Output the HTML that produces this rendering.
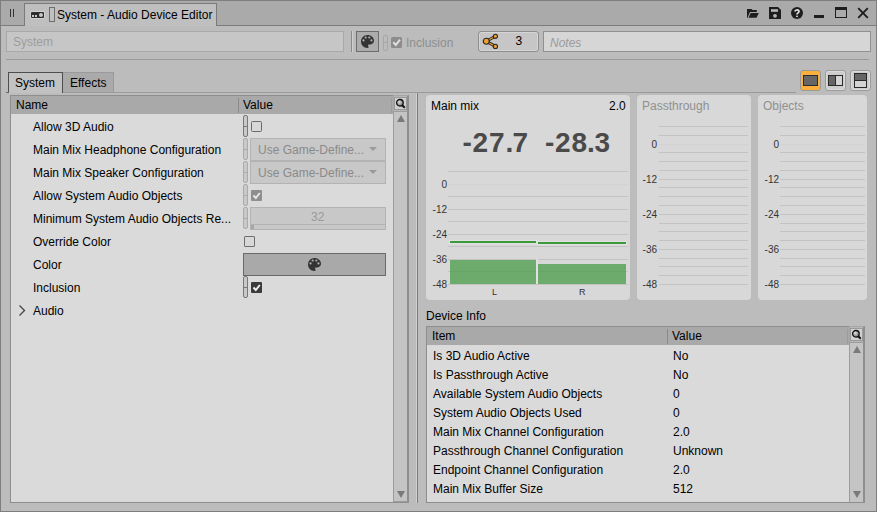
<!DOCTYPE html>
<html><head><meta charset="utf-8">
<style>
*{box-sizing:border-box;margin:0;padding:0}
html,body{width:877px;height:512px;overflow:hidden}
body{position:relative;background:#bcbcbc;font-family:"Liberation Sans",sans-serif;font-size:12px;color:#000000}
.a{position:absolute}
.t{position:absolute;white-space:nowrap;line-height:14px}
svg.a{overflow:visible}
</style></head><body>
<div class="a" style="left:0px;top:0px;width:877px;height:512px;border:1px solid #7e7e7e"></div>
<div class="a" style="left:1px;top:1px;width:875px;height:25px;background:#aaaaaa;border-bottom:1px solid #7c7c7c"></div>
<div class="a" style="left:10px;top:9px;width:1px;height:8px;background:#333"></div>
<div class="a" style="left:13px;top:9px;width:1px;height:8px;background:#333"></div>
<div class="a" style="left:24px;top:3px;width:193px;height:23px;background:#bfbfbf;border:1px solid #7a7a7a;border-bottom:none"></div>
<div class="t" style="left:57px;top:8px;">System - Audio Device Editor</div>
<div class="a" style="left:30px;top:11px;width:15px;height:8px;background:#d2d2d2;border-radius:2px"></div>
<div class="a" style="left:31px;top:12px;width:13px;height:6px;background:#2d2d2d;border-radius:1px"></div>
<div class="a" style="left:32px;top:15px;width:2px;height:2px;background:#c8c8c8"></div>
<div class="a" style="left:35px;top:15px;width:2px;height:2px;background:#c8c8c8"></div>
<div class="a" style="left:39px;top:13px;width:4px;height:4px;background:#c8c8c8;border-radius:50%"></div>
<div class="a" style="left:49px;top:7px;width:6px;height:15px;background:#c0c0c0;border:1px solid #6e6e6e"></div>
<svg class="a" style="left:744px;top:5px" width="20" height="16" viewBox="0 0 20 16"><path d="M3 3.9 H7.5 L8.5 5 H12.8 V6.9 H6 L3.9 11.8 V12.65 H3 Z" fill="#1e1e1e"/><path d="M6.7 8 H14.8 L12.5 12.65 H4.5 Z" fill="#1e1e1e"/></svg>
<svg class="a" style="left:769px;top:7px" width="12" height="12" viewBox="0 0 12 12"><path d="M0 0 H9 L12 3 V12 H0 Z" fill="#1e1e1e"/><rect x="2" y="2.2" width="7" height="2.6" fill="#b8b8b8"/><circle cx="6" cy="8.8" r="1.9" fill="#b8b8b8"/></svg>
<svg class="a" style="left:791px;top:7px" width="12" height="12" viewBox="0 0 12 12"><circle cx="6" cy="6" r="6" fill="#1e1e1e"/><path d="M4 4.6 C4 2.4 8 2.4 8 4.4 C8 5.9 6 5.9 6 7.5" fill="none" stroke="#e8e8e8" stroke-width="1.6"/><rect x="5.2" y="8.6" width="1.6" height="1.5" fill="#e8e8e8"/></svg>
<div class="a" style="left:814px;top:15px;width:10px;height:3px;background:#1e1e1e"></div>
<div class="a" style="left:835px;top:7px;width:12px;height:11px;border:1px solid #1e1e1e;border-top-width:3px"></div>
<svg class="a" style="left:857px;top:7px" width="12" height="12" viewBox="0 0 12 12"><path d="M1.2 1.2 L10.8 10.8 M10.8 1.2 L1.2 10.8" stroke="#1e1e1e" stroke-width="1.9"/></svg>
<div class="a" style="left:6px;top:31px;width:338px;height:21px;background:#c6c6c6;border:1px solid #a9a9a9"></div>
<div class="t" style="left:13px;top:35px;color:#9c9c9c">System</div>
<div class="a" style="left:351px;top:31px;width:1px;height:21px;background:#8a8a8a"></div>
<div class="a" style="left:352px;top:31px;width:1px;height:21px;background:#d0d0d0"></div>
<div class="a" style="left:356px;top:31px;width:23px;height:21px;background:#acacac;border:1px solid #6e6e6e"></div>
<svg class="a" style="left:361px;top:35px" width="13" height="13" viewBox="3 3 18 18"><path d="M12 3c-4.97 0-9 4.03-9 9s4.03 9 9 9c.83 0 1.5-.67 1.5-1.5 0-.39-.15-.74-.39-1.01-.23-.26-.38-.61-.38-.99 0-.83.67-1.5 1.5-1.5H16c2.76 0 5-2.24 5-5 0-4.42-4.03-8-9-8zm-5.5 9c-.83 0-1.5-.67-1.5-1.5S5.67 9 6.5 9 8 9.67 8 10.5 7.33 12 6.5 12zm3-4C8.67 8 8 7.33 8 6.5S8.67 5 9.5 5s1.5.67 1.5 1.5S10.33 8 9.5 8zm5 0c-.83 0-1.5-.67-1.5-1.5S13.67 5 14.5 5s1.5.67 1.5 1.5S15.33 8 14.5 8zm3 4c-.83 0-1.5-.67-1.5-1.5S16.67 9 17.5 9s1.5.67 1.5 1.5-.67 1.5-1.5 1.5z" fill="#333" fill-rule="evenodd"/></svg>
<div class="a" style="left:383px;top:35px;width:5px;height:16px;border:1px solid #a6a6a6;border-radius:2px"></div>
<div class="a" style="left:383px;top:42px;width:5px;height:1px;background:#a6a6a6"></div>
<div class="a" style="left:391px;top:37px;width:11px;height:11px;background:#8c8c8c;border-radius:1.5px"></div>
<svg class="a" style="left:391px;top:37px" width="11" height="11"><path d="M2.3 5.3 L4.8 8 L9 2.6" fill="none" stroke="#e0e0e0" stroke-width="2"/></svg>
<div class="t" style="left:406px;top:36px;color:#8e8e8e">Inclusion</div>
<div class="a" style="left:478px;top:31px;width:61px;height:21px;background:#c6c6c6;border:1px solid #8e8e8e;border-radius:3px;box-shadow:inset 0 0 0 1px #d6d6d6"></div>
<svg class="a" style="left:480px;top:32px" width="20" height="19" viewBox="0 0 20 19"><path d="M6.3 9.25 L15.4 4.3 M6.3 9.25 L15.4 14.4" stroke="#2a2a2a" stroke-width="3"/><path d="M6.3 9.25 L15.4 4.3 M6.3 9.25 L15.4 14.4" stroke="#f0a030" stroke-width="1.2"/><circle cx="6.3" cy="9.25" r="3" fill="#f0a030" stroke="#2a2a2a" stroke-width="1.2"/><circle cx="15.4" cy="4.3" r="2.1" fill="#f0a030" stroke="#2a2a2a" stroke-width="1.1"/><circle cx="15.4" cy="14.4" r="2.1" fill="#f0a030" stroke="#2a2a2a" stroke-width="1.1"/></svg>
<div class="t" style="left:515.5px;top:34px;">3</div>
<div class="a" style="left:543px;top:31px;width:328px;height:21px;background:#d6d6d6;border:1px solid #909090"></div>
<div class="t" style="left:550px;top:36px;color:#9a9a9a;font-style:italic">Notes</div>
<div class="a" style="left:6px;top:59px;width:863px;height:1px;background:#9a9a9a"></div>
<div class="a" style="left:8px;top:72px;width:55px;height:21px;background:#c2c2c2;border:1px solid #4e4e4e;border-bottom:none"></div>
<div class="t" style="left:15px;top:76px;">System</div>
<div class="a" style="left:63px;top:72px;width:51px;height:20px;background:#aaaaaa;border:1px solid #9a9a9a;border-bottom:none;border-left:none"></div>
<div class="t" style="left:70px;top:76px;">Effects</div>
<div class="a" style="left:63px;top:92px;width:733px;height:1px;background:#9a9a9a"></div>
<div class="a" style="left:6px;top:92px;width:3px;height:1px;background:#6a6a6a"></div>
<div class="a" style="left:10px;top:95px;width:399px;height:408px;background:#dadada;border:1px solid #8e8e8e"></div>
<div class="a" style="left:11px;top:96px;width:382px;height:18px;background:#a9a9a9"></div>
<div class="t" style="left:16px;top:98px;">Name</div>
<div class="a" style="left:238px;top:98px;width:1px;height:15px;background:#8a8a8a"></div>
<div class="t" style="left:243px;top:98px;">Value</div>
<div class="a" style="left:393px;top:95px;width:16px;height:17px;background:#b8b8b8;border:1px solid #a6a6a6;border-right:2px solid #8e8e8e"></div>
<div class="a" style="left:394px;top:97px;width:13px;height:13px;background:#d0d0d0;border:1px solid #9a9a9a"></div>
<svg class="a" style="left:395px;top:98px" width="12" height="12"><defs><radialGradient id="mg1" cx="0.4" cy="0.35" r="0.7"><stop offset="0" stop-color="#e0e0e0"/><stop offset="1" stop-color="#707070"/></radialGradient></defs><circle cx="4.9" cy="4.8" r="3.3" fill="url(#mg1)" stroke="#111" stroke-width="1.3"/><path d="M7.2 7.2 L9.8 9.8" stroke="#111" stroke-width="2"/></svg>
<div class="a" style="left:391px;top:98px;width:1px;height:15px;background:#9c9c9c"></div>
<div class="a" style="left:393px;top:111px;width:16px;height:391px;background:#c4c4c4;border:1px solid #9c9c9c;border-right:2px solid #8e8e8e"></div>
<div class="a" style="left:397px;top:115px;width:0;height:0;border-left:4px solid transparent;border-right:4px solid transparent;border-bottom:7px solid #7a7a7a"></div>
<div class="a" style="left:397px;top:491px;width:0;height:0;border-left:4px solid transparent;border-right:4px solid transparent;border-top:7px solid #7a7a7a"></div>
<div class="t" style="left:33px;top:120px;">Allow 3D Audio</div>
<div class="t" style="left:33px;top:143px;">Main Mix Headphone Configuration</div>
<div class="t" style="left:33px;top:166px;">Main Mix Speaker Configuration</div>
<div class="t" style="left:33px;top:189px;">Allow System Audio Objects</div>
<div class="t" style="left:33px;top:212px;">Minimum System Audio Objects Re...</div>
<div class="t" style="left:33px;top:235px;">Override Color</div>
<div class="t" style="left:33px;top:258px;">Color</div>
<div class="t" style="left:33px;top:281px;">Inclusion</div>
<div class="t" style="left:33px;top:304px;">Audio</div>
<div class="a" style="left:243px;top:115px;width:5px;height:22px;background:#c9c9c9;border:1px solid #787878;border-radius:2px"></div>
<div class="a" style="left:243px;top:126px;width:5px;height:1px;background:#787878"></div>
<div class="a" style="left:251px;top:121px;width:11px;height:11px;background:#d8d8d8;border:1px solid #6a6a6a;border-radius:1.5px"></div>
<div class="a" style="left:243px;top:138px;width:5px;height:22px;background:#c9c9c9;border:1px solid #ababab;border-radius:2px"></div>
<div class="a" style="left:243px;top:149px;width:5px;height:1px;background:#ababab"></div>
<div class="a" style="left:250px;top:138px;width:136px;height:23px;background:#c8c8c8;border:1px solid #b3b3b3"></div>
<div class="t" style="left:258px;top:143px;color:#8a8a8a">Use Game-Define...</div>
<div class="a" style="left:369px;top:147px;width:0;height:0;border-left:4px solid transparent;border-right:4px solid transparent;border-top:4px solid #9a9a9a"></div>
<div class="a" style="left:243px;top:161px;width:5px;height:22px;background:#c9c9c9;border:1px solid #ababab;border-radius:2px"></div>
<div class="a" style="left:243px;top:172px;width:5px;height:1px;background:#ababab"></div>
<div class="a" style="left:250px;top:161px;width:136px;height:23px;background:#c8c8c8;border:1px solid #b3b3b3"></div>
<div class="t" style="left:258px;top:166px;color:#8a8a8a">Use Game-Define...</div>
<div class="a" style="left:369px;top:170px;width:0;height:0;border-left:4px solid transparent;border-right:4px solid transparent;border-top:4px solid #9a9a9a"></div>
<div class="a" style="left:243px;top:184px;width:5px;height:22px;background:#c9c9c9;border:1px solid #ababab;border-radius:2px"></div>
<div class="a" style="left:243px;top:195px;width:5px;height:1px;background:#ababab"></div>
<div class="a" style="left:251px;top:190px;width:11px;height:11px;background:#8e8e8e;border-radius:1px"></div>
<svg class="a" style="left:251px;top:190px" width="11" height="11"><path d="M2.5 5.5 L4.8 8 L8.8 3" fill="none" stroke="#e6e6e6" stroke-width="2"/></svg>
<div class="a" style="left:243px;top:207px;width:5px;height:22px;background:#c9c9c9;border:1px solid #ababab;border-radius:2px"></div>
<div class="a" style="left:243px;top:218px;width:5px;height:1px;background:#ababab"></div>
<div class="a" style="left:250px;top:207px;width:136px;height:23px;background:#c8c8c8;border:1px solid #b3b3b3"></div>
<div class="a" style="left:251px;top:224px;width:134px;height:1px;background:#b3b3b3"></div>
<div class="a" style="left:251px;top:225px;width:3px;height:4px;background:#a6a6a6"></div>
<div class="t" style="left:311px;top:210px;color:#9a9a9a">32</div>
<div class="a" style="left:244px;top:236px;width:11px;height:11px;background:#d8d8d8;border:1px solid #6e6e6e;border-radius:1px"></div>
<div class="a" style="left:243px;top:253px;width:143px;height:23px;background:#a9a9a9;border:1px solid #6a6a6a"></div>
<svg class="a" style="left:308px;top:258px" width="13" height="13" viewBox="3 3 18 18"><path d="M12 3c-4.97 0-9 4.03-9 9s4.03 9 9 9c.83 0 1.5-.67 1.5-1.5 0-.39-.15-.74-.39-1.01-.23-.26-.38-.61-.38-.99 0-.83.67-1.5 1.5-1.5H16c2.76 0 5-2.24 5-5 0-4.42-4.03-8-9-8zm-5.5 9c-.83 0-1.5-.67-1.5-1.5S5.67 9 6.5 9 8 9.67 8 10.5 7.33 12 6.5 12zm3-4C8.67 8 8 7.33 8 6.5S8.67 5 9.5 5s1.5.67 1.5 1.5S10.33 8 9.5 8zm5 0c-.83 0-1.5-.67-1.5-1.5S13.67 5 14.5 5s1.5.67 1.5 1.5S15.33 8 14.5 8zm3 4c-.83 0-1.5-.67-1.5-1.5S16.67 9 17.5 9s1.5.67 1.5 1.5-.67 1.5-1.5 1.5z" fill="#333" fill-rule="evenodd"/></svg>
<div class="a" style="left:243px;top:276px;width:5px;height:22px;background:#c9c9c9;border:1px solid #787878;border-radius:2px"></div>
<div class="a" style="left:243px;top:287px;width:5px;height:1px;background:#787878"></div>
<div class="a" style="left:251px;top:282px;width:11px;height:11px;background:#3a3a3a;border-radius:1px"></div>
<svg class="a" style="left:251px;top:282px" width="11" height="11"><path d="M2.5 5.5 L4.8 8 L8.8 3" fill="none" stroke="#f0f0f0" stroke-width="2"/></svg>
<svg class="a" style="left:17px;top:304px" width="10" height="14"><path d="M2.5 1.5 L7.5 6.5 L2.5 11.5" fill="none" stroke="#444" stroke-width="1.3"/></svg>
<div class="a" style="left:416px;top:93px;width:1px;height:410px;background:#d0d0d0"></div>
<div class="a" style="left:417px;top:93px;width:1px;height:410px;background:#7c7c7c"></div>
<div class="a" style="left:800px;top:70px;width:21px;height:21px;background:#fbb03b;border:1px solid #9a9a9a;border-radius:3px"></div>
<div class="a" style="left:803px;top:75px;width:15px;height:11px;background:#666;border:1.5px solid #2a2a3a"></div>
<div class="a" style="left:825px;top:70px;width:21px;height:21px;background:#cdcdcd;border:1px solid #9a9a9a;border-radius:3px;box-shadow:inset 0 0 0 1px #dcdcdc"></div>
<div class="a" style="left:828px;top:75px;width:15px;height:11px;background:linear-gradient(90deg,#666 0,#666 50%,#d4d4d4 50%);border:1.5px solid #2a2a2a"></div>
<div class="a" style="left:835px;top:75px;width:1px;height:11px;background:#2a2a2a"></div>
<div class="a" style="left:850px;top:70px;width:21px;height:21px;background:#cdcdcd;border:1px solid #9a9a9a;border-radius:3px;box-shadow:inset 0 0 0 1px #dcdcdc"></div>
<div class="a" style="left:854px;top:73px;width:13px;height:15px;background:linear-gradient(180deg,#666 0,#666 50%,#d4d4d4 50%);border:1.5px solid #2a2a2a"></div>
<div class="a" style="left:854px;top:80px;width:13px;height:1px;background:#2a2a2a"></div>
<div class="a" style="left:426px;top:95px;width:204px;height:205px;background:#d8d8d8;border-radius:4px"></div>
<div class="t" style="left:431px;top:99px;">Main mix</div>
<div class="t" style="left:609px;top:99px;">2.0</div>
<div class="a" style="left:637px;top:95px;width:114px;height:205px;background:#d8d8d8;border-radius:4px"></div>
<div class="t" style="left:642px;top:99px;color:#909090">Passthrough</div>
<div class="a" style="left:758px;top:95px;width:109px;height:205px;background:#d8d8d8;border-radius:4px"></div>
<div class="t" style="left:763px;top:99px;color:#909090">Objects</div>
<div class="t" style="left:462.5px;top:128px;font-size:28px;line-height:30px;font-weight:bold;color:#4a4a4a;letter-spacing:0.8px">-27<span style="margin-right:-1.5px">.</span>7</div>
<div class="t" style="left:545px;top:128px;font-size:28px;line-height:30px;font-weight:bold;color:#4a4a4a;letter-spacing:0.8px">-28<span style="margin-left:-1px;margin-right:-1px">.</span>3</div>
<div class="a" style="left:448px;top:171px;width:180px;height:1px;background:#c3c3c3"></div>
<div class="a" style="left:448px;top:184px;width:180px;height:1px;background:#d2d2d2"></div>
<div class="a" style="left:448px;top:196px;width:180px;height:1px;background:#c3c3c3"></div>
<div class="a" style="left:448px;top:209px;width:180px;height:1px;background:#c3c3c3"></div>
<div class="a" style="left:448px;top:221px;width:180px;height:1px;background:#c3c3c3"></div>
<div class="a" style="left:448px;top:234px;width:180px;height:1px;background:#c3c3c3"></div>
<div class="a" style="left:448px;top:246px;width:180px;height:1px;background:#c3c3c3"></div>
<div class="a" style="left:448px;top:259px;width:180px;height:1px;background:#c3c3c3"></div>
<div class="a" style="left:448px;top:271px;width:180px;height:1px;background:#c3c3c3"></div>
<div class="a" style="left:448px;top:284px;width:180px;height:1px;background:#c3c3c3"></div>
<div class="t" style="left:407px;top:178px;width:40px;text-align:right;font-size:10px;color:#333">0</div>
<div class="t" style="left:407px;top:203px;width:40px;text-align:right;font-size:10px;color:#333">-12</div>
<div class="t" style="left:407px;top:228px;width:40px;text-align:right;font-size:10px;color:#333">-24</div>
<div class="t" style="left:407px;top:253px;width:40px;text-align:right;font-size:10px;color:#333">-36</div>
<div class="t" style="left:407px;top:278px;width:40px;text-align:right;font-size:10px;color:#333">-48</div>
<div class="a" style="left:450px;top:260px;width:86px;height:24px;background:#6dab6d"></div>
<div class="a" style="left:538px;top:264px;width:88px;height:20px;background:#6dab6d"></div>
<div class="a" style="left:450px;top:271px;width:176px;height:1px;background:rgba(0,0,0,0.045)"></div>
<div class="a" style="left:536px;top:259px;width:2px;height:25px;background:#e0e0e0"></div>
<div class="a" style="left:450px;top:241px;width:86px;height:2px;background:#3a9a3a;box-shadow:0 0 0 1px #e2e2e2"></div>
<div class="a" style="left:538px;top:242px;width:88px;height:2px;background:#3a9a3a;box-shadow:0 0 0 1px #e2e2e2"></div>
<div class="t" style="left:492px;top:285px;font-size:9px;color:#333">L</div>
<div class="t" style="left:579px;top:285px;font-size:9px;color:#333">R</div>
<div class="a" style="left:659px;top:126px;width:89px;height:1px;background:#c3c3c3"></div>
<div class="a" style="left:659px;top:135px;width:89px;height:1px;background:#c3c3c3"></div>
<div class="a" style="left:659px;top:144px;width:89px;height:1px;background:#d2d2d2"></div>
<div class="a" style="left:659px;top:152px;width:89px;height:1px;background:#c3c3c3"></div>
<div class="a" style="left:659px;top:161px;width:89px;height:1px;background:#c3c3c3"></div>
<div class="a" style="left:659px;top:170px;width:89px;height:1px;background:#c3c3c3"></div>
<div class="a" style="left:659px;top:179px;width:89px;height:1px;background:#c3c3c3"></div>
<div class="a" style="left:659px;top:187px;width:89px;height:1px;background:#c3c3c3"></div>
<div class="a" style="left:659px;top:196px;width:89px;height:1px;background:#c3c3c3"></div>
<div class="a" style="left:659px;top:205px;width:89px;height:1px;background:#c3c3c3"></div>
<div class="a" style="left:659px;top:214px;width:89px;height:1px;background:#c3c3c3"></div>
<div class="a" style="left:659px;top:223px;width:89px;height:1px;background:#c3c3c3"></div>
<div class="a" style="left:659px;top:231px;width:89px;height:1px;background:#c3c3c3"></div>
<div class="a" style="left:659px;top:240px;width:89px;height:1px;background:#c3c3c3"></div>
<div class="a" style="left:659px;top:249px;width:89px;height:1px;background:#c3c3c3"></div>
<div class="a" style="left:659px;top:258px;width:89px;height:1px;background:#c3c3c3"></div>
<div class="a" style="left:659px;top:266px;width:89px;height:1px;background:#c3c3c3"></div>
<div class="a" style="left:659px;top:275px;width:89px;height:1px;background:#c3c3c3"></div>
<div class="a" style="left:659px;top:284px;width:89px;height:1px;background:#c3c3c3"></div>
<div class="t" style="left:617px;top:138px;width:40px;text-align:right;font-size:10px;color:#333">0</div>
<div class="t" style="left:617px;top:173px;width:40px;text-align:right;font-size:10px;color:#333">-12</div>
<div class="t" style="left:617px;top:208px;width:40px;text-align:right;font-size:10px;color:#333">-24</div>
<div class="t" style="left:617px;top:243px;width:40px;text-align:right;font-size:10px;color:#333">-36</div>
<div class="t" style="left:617px;top:278px;width:40px;text-align:right;font-size:10px;color:#333">-48</div>
<div class="a" style="left:780px;top:126px;width:85px;height:1px;background:#c3c3c3"></div>
<div class="a" style="left:780px;top:135px;width:85px;height:1px;background:#c3c3c3"></div>
<div class="a" style="left:780px;top:144px;width:85px;height:1px;background:#d2d2d2"></div>
<div class="a" style="left:780px;top:152px;width:85px;height:1px;background:#c3c3c3"></div>
<div class="a" style="left:780px;top:161px;width:85px;height:1px;background:#c3c3c3"></div>
<div class="a" style="left:780px;top:170px;width:85px;height:1px;background:#c3c3c3"></div>
<div class="a" style="left:780px;top:179px;width:85px;height:1px;background:#c3c3c3"></div>
<div class="a" style="left:780px;top:187px;width:85px;height:1px;background:#c3c3c3"></div>
<div class="a" style="left:780px;top:196px;width:85px;height:1px;background:#c3c3c3"></div>
<div class="a" style="left:780px;top:205px;width:85px;height:1px;background:#c3c3c3"></div>
<div class="a" style="left:780px;top:214px;width:85px;height:1px;background:#c3c3c3"></div>
<div class="a" style="left:780px;top:223px;width:85px;height:1px;background:#c3c3c3"></div>
<div class="a" style="left:780px;top:231px;width:85px;height:1px;background:#c3c3c3"></div>
<div class="a" style="left:780px;top:240px;width:85px;height:1px;background:#c3c3c3"></div>
<div class="a" style="left:780px;top:249px;width:85px;height:1px;background:#c3c3c3"></div>
<div class="a" style="left:780px;top:258px;width:85px;height:1px;background:#c3c3c3"></div>
<div class="a" style="left:780px;top:266px;width:85px;height:1px;background:#c3c3c3"></div>
<div class="a" style="left:780px;top:275px;width:85px;height:1px;background:#c3c3c3"></div>
<div class="a" style="left:780px;top:284px;width:85px;height:1px;background:#c3c3c3"></div>
<div class="t" style="left:739px;top:138px;width:40px;text-align:right;font-size:10px;color:#333">0</div>
<div class="t" style="left:739px;top:173px;width:40px;text-align:right;font-size:10px;color:#333">-12</div>
<div class="t" style="left:739px;top:208px;width:40px;text-align:right;font-size:10px;color:#333">-24</div>
<div class="t" style="left:739px;top:243px;width:40px;text-align:right;font-size:10px;color:#333">-36</div>
<div class="t" style="left:739px;top:278px;width:40px;text-align:right;font-size:10px;color:#333">-48</div>
<div class="t" style="left:426px;top:309px;">Device Info</div>
<div class="a" style="left:426px;top:326px;width:439px;height:177px;background:#dadada;border:1px solid #8e8e8e"></div>
<div class="a" style="left:427px;top:327px;width:423px;height:18px;background:#a9a9a9"></div>
<div class="t" style="left:432px;top:329px;">Item</div>
<div class="a" style="left:667px;top:329px;width:1px;height:15px;background:#8a8a8a"></div>
<div class="t" style="left:672px;top:329px;">Value</div>
<div class="t" style="left:433px;top:349px;">Is 3D Audio Active</div>
<div class="t" style="left:673px;top:349px;">No</div>
<div class="t" style="left:433px;top:368px;">Is Passthrough Active</div>
<div class="t" style="left:673px;top:368px;">No</div>
<div class="t" style="left:433px;top:387px;">Available System Audio Objects</div>
<div class="t" style="left:673px;top:387px;">0</div>
<div class="t" style="left:433px;top:406px;">System Audio Objects Used</div>
<div class="t" style="left:673px;top:406px;">0</div>
<div class="t" style="left:433px;top:425px;">Main Mix Channel Configuration</div>
<div class="t" style="left:673px;top:425px;">2.0</div>
<div class="t" style="left:433px;top:444px;">Passthrough Channel Configuration</div>
<div class="t" style="left:673px;top:444px;">Unknown</div>
<div class="t" style="left:433px;top:463px;">Endpoint Channel Configuration</div>
<div class="t" style="left:673px;top:463px;">2.0</div>
<div class="t" style="left:433px;top:482px;">Main Mix Buffer Size</div>
<div class="t" style="left:673px;top:482px;">512</div>
<div class="a" style="left:849px;top:326px;width:16px;height:17px;background:#b8b8b8;border:1px solid #a6a6a6;border-right:2px solid #8e8e8e"></div>
<div class="a" style="left:850px;top:328px;width:13px;height:13px;background:#d0d0d0;border:1px solid #9a9a9a"></div>
<svg class="a" style="left:851px;top:329px" width="12" height="12"><defs><radialGradient id="mg2" cx="0.4" cy="0.35" r="0.7"><stop offset="0" stop-color="#e0e0e0"/><stop offset="1" stop-color="#707070"/></radialGradient></defs><circle cx="4.9" cy="4.8" r="3.3" fill="url(#mg2)" stroke="#111" stroke-width="1.3"/><path d="M7.2 7.2 L9.8 9.8" stroke="#111" stroke-width="2"/></svg>
<div class="a" style="left:847px;top:329px;width:1px;height:15px;background:#9c9c9c"></div>
<div class="a" style="left:849px;top:342px;width:16px;height:161px;background:#c4c4c4;border:1px solid #9c9c9c;border-right:2px solid #8e8e8e;border-bottom-color:#8e8e8e"></div>
<div class="a" style="left:853px;top:346px;width:0;height:0;border-left:4px solid transparent;border-right:4px solid transparent;border-bottom:7px solid #7a7a7a"></div>
<div class="a" style="left:853px;top:491px;width:0;height:0;border-left:4px solid transparent;border-right:4px solid transparent;border-top:7px solid #7a7a7a"></div>
</body></html>
